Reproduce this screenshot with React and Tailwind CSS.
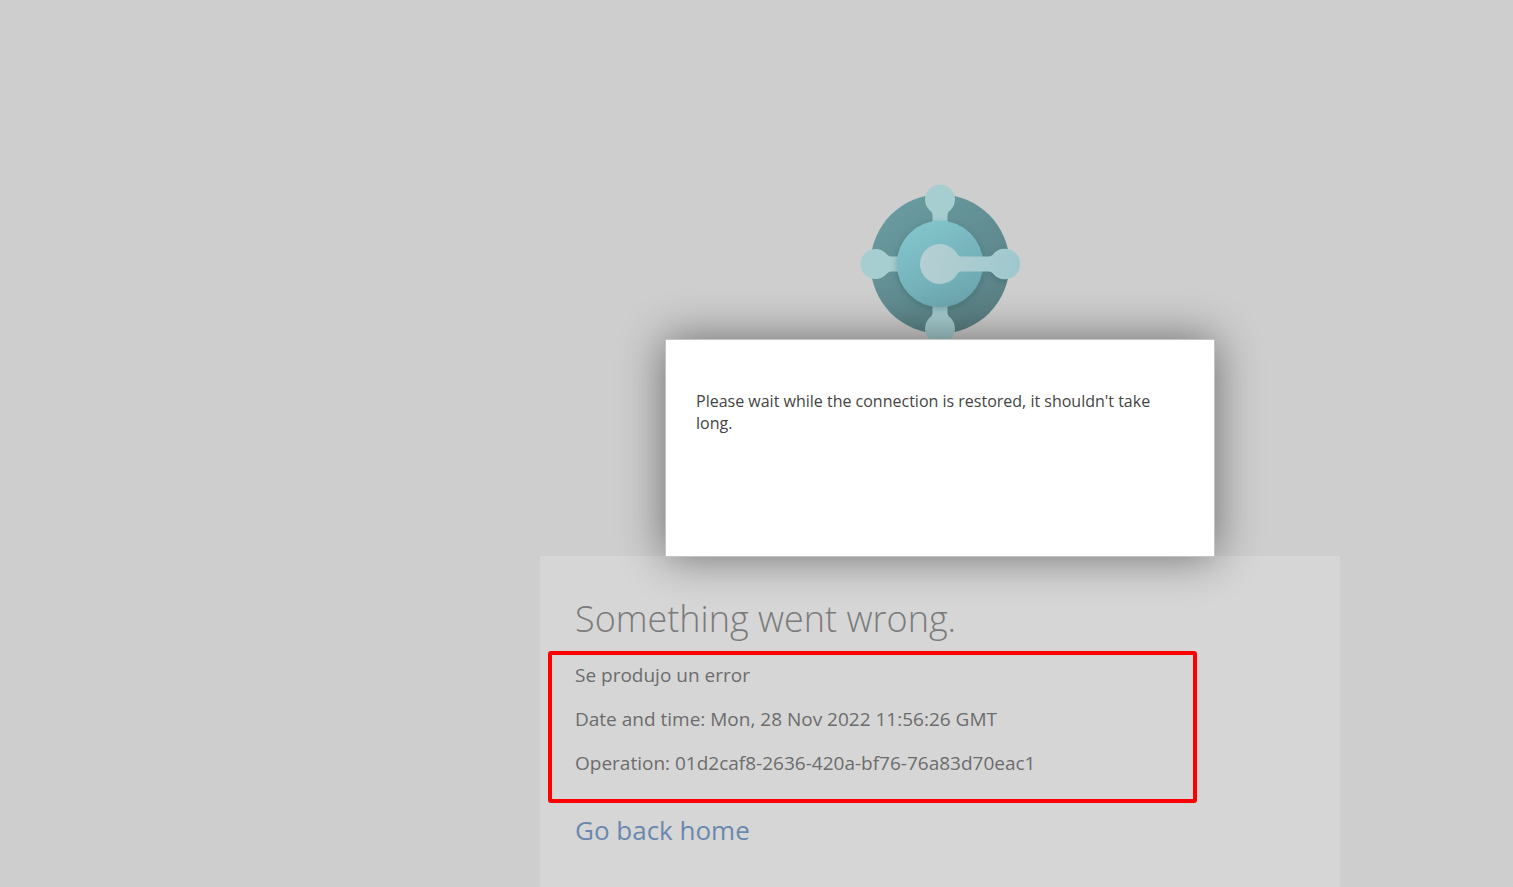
const details = [
  "Se produjo un error",
  "Date and time: Mon, 28 Nov 2022 11:56:26 GMT",
  "Operation: 01d2caf8-2636-420a-bf76-76a83d70eac1",
];

function Logo() {
  return (
    <svg className="size-40" viewBox="0 0 160 160" role="img" aria-label="Business Central">
      <defs>
        <linearGradient id="ring" x1="0.2" y1="0.05" x2="0.8" y2="0.95">
          <stop offset="0" stopColor="#689ba0" />
          <stop offset="1" stopColor="#5a7f83" />
        </linearGradient>
        <linearGradient id="disc" x1="0.25" y1="0.05" x2="0.75" y2="0.95">
          <stop offset="0" stopColor="#82c4cb" />
          <stop offset="1" stopColor="#6ca6af" />
        </linearGradient>
        <linearGradient id="link" gradientUnits="userSpaceOnUse" x1="60" y1="65" x2="160" y2="90">
          <stop offset="0" stopColor="#b6cfd3" />
          <stop offset="1" stopColor="#9ec8cd" />
        </linearGradient>
        <filter id="shade" x="-30%" y="-30%" width="160%" height="160%">
          <feDropShadow dx="0" dy="2" stdDeviation="3" floodColor="#1f4448" floodOpacity="0.3" />
        </filter>
        <clipPath id="ringClip">
          <circle cx="80" cy="80" r="69.500" />
        </clipPath>
      </defs>
      <circle cx="80" cy="80" r="69.500" fill="url(#ring)" />
      <g fill="#a6cdd0">
        <path d="M72.500 45V31Q72.500 29 70.700 27.200A15 15 0 1 1 89.300 27.200Q87.500 29 87.500 31V45Z" />
        <path d="M72.500 115V129Q72.500 131 70.700 132.800A15 15 0 1 0 89.300 132.800Q87.500 131 87.500 129V115Z" />
        <path d="M45 72.500H31Q29 72.500 27.200 70.700A15 15 0 1 0 27.200 89.300Q29 87.500 31 87.500H45Z" />
      </g>
      <g clipPath="url(#ringClip)">
        <circle cx="145" cy="80" r="15" fill="#9ec8cd" filter="url(#shade)" />
        <circle cx="80" cy="80" r="43.200" fill="url(#disc)" filter="url(#shade)" />
      </g>
      <path
        d="M60 80A20 20 0 0 1 97 69.500Q98.500 72.500 101 72.500H129Q131 72.500 132.800 70.700A15.300 15.300 0 1 1 132.800 89.300Q131 87.500 129 87.500H101Q98.500 87.500 97 90.500A20 20 0 0 1 60 80Z"
        fill="url(#link)"
      />
    </svg>
  );
}

export default function App() {
  return (
    <div className="relative min-h-screen bg-[#cecece] pl-[367px] font-['Open_Sans','Noto_Sans',sans-serif]">
      <main className="flex min-h-screen flex-col items-center pt-[184px]">
        <Logo />
        <section className="mt-[212px] w-full max-w-[800px] grow bg-[#d6d6d6] px-2 pt-9">
          <h1 className="px-[27px] text-4xl leading-[54px] font-light text-[#7b7b7b]">
            Something went wrong.
          </h1>
          <div className="mt-[5px] flex max-w-[649px] flex-col gap-4 rounded-[3px] border-4 border-[#ff0000] px-[23px] pt-[6px] pb-[22px] text-[19px] leading-7 text-[#6c6c6c]">
            {details.map((line) => (
              <p key={line}>{line}</p>
            ))}
          </div>
          <a href="#home" className="mx-[27px] mt-[9px] inline-block text-[26px] leading-9 text-[#6a88ae]">
            Go back home
          </a>
        </section>
      </main>
      <div className="absolute inset-0 flex items-center justify-center pt-[9px] pl-[367px]">
        <div
          role="dialog"
          aria-label="Connection status"
          className="h-[218px] w-full max-w-[550px] border border-[#c4c4c4] bg-white px-[30px] pt-[50px] text-base leading-[22px] text-[#444444] shadow-[0_0_42px_rgba(0,0,0,0.48)]"
        >
          <p>Please wait while the connection is restored, it shouldn't take long.</p>
        </div>
      </div>
    </div>
  );
}
